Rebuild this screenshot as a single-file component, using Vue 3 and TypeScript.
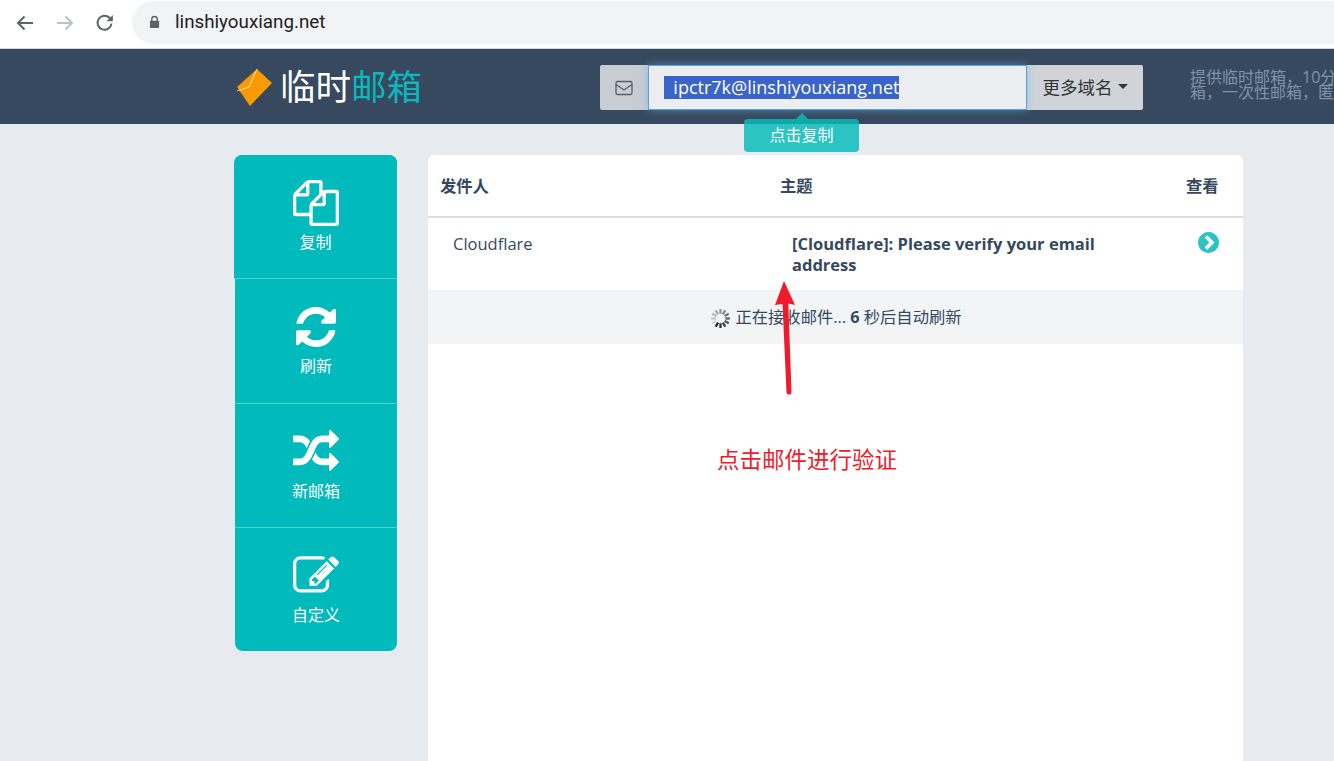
<script setup lang="ts">
// Ticks of the loading spinner, fading round the circle
const ticks = Array.from({ length: 12 }, (_, i) => ({
  angle: i * 30,
  opacity: 0.12 + (((i + 4) % 12) / 11) * 0.88,
}));

const rows = [
  { sender: 'Cloudflare', subject: '[Cloudflare]: Please verify your email address' },
];

const actions = [
  { label: '复制', box: '0 0 1792 1792', d: 'M1696 384q40 0 68 28t28 68v1216q0 40-28 68t-68 28h-960q-40 0-68-28t-28-68v-288h-544q-40 0-68-28t-28-68v-672q0-40 20-88t48-76l408-408q28-28 76-48t88-20h416q40 0 68 28t28 68v328q68-40 128-40h416zm-544 213l-299 299h299v-299zm-640-384l-299 299h299v-299zm196 647l316-316v-416h-384v416q0 40-28 68t-68 28h-416v640h512v-256q0-40 20-88t48-76zm956 804v-1152h-384v416q0 40-28 68t-68 28h-416v640h896z' },
  { label: '刷新', box: '14 14 1764 1764', d: 'M1639 1056q0 5-1 7-64 268-268 434.500t-478 166.500q-146 0-282.500-55t-243.500-157l-129 129q-19 19-45 19t-45-19-19-45v-448q0-26 19-45t45-19h448q26 0 45 19t19 45-19 45l-137 137q71 66 161 102t187 36q134 0 250-65t186-179q11-17 53-117 8-23 30-23h192q13 0 22.500 9.500t9.500 22.500zm25-800v448q0 26-19 45t-45 19h-448q-26 0-45-19t-19-45 19-45l138-138q-148-137-349-137-134 0-250 65t-186 179q-11 17-53 117-8 23-30 23h-199q-13 0-22.500-9.500t-9.500-22.500v-7q65-268 270-434.500t480-166.500q146 0 284 55.500t245 156.500l130-129q19-19 45-19t45 19 19 45z' },
  { label: '新邮箱', box: '0 128 1792 1536', d: 'M666 481q-60 92-137 273-22-45-37-72.500t-40.500-63.500-51-56.500-63-35-81.500-14.500h-224q-14 0-23-9t-9-23v-192q0-14 9-23t23-9h224q250 0 410 225zm1126 799q0 14-9 23l-320 320q-9 9-23 9-13 0-22.500-9.500t-9.500-22.500v-192q-32 0-85 .5t-81 1-73-1-71-5-64-10.500-63-18.500-58-28.500-59-40-55-53.500-56-69.500q59-93 136-273 22 45 37 72.500t40.500 63.500 51 56.500 63 35 81.500 14.500h256v-192q0-14 9-23t23-9q12 0 24 10l319 319q9 9 9 23zm0-896q0 14-9 23l-320 320q-9 9-23 9-13 0-22.500-9.500t-9.500-22.500v-192h-256q-48 0-87 15t-69 45-51 61.500-45 77.500q-32 62-78 171-29 66-49.500 111t-54 105-64 100-74 83-90 68.500-106.500 42-128 16.500h-224q-14 0-23-9t-9-23v-192q0-14 9-23t23-9h224q48 0 87-15t69-45 51-61.500 45-77.500q32-62 78-171 29-66 49.500-111t54-105 64-100 74-83 90-68.500 106.500-42 128-16.500h256v-192q0-14 9-23t23-9q12 0 24 10l319 319q9 9 9 23z' },
  { label: '自定义', box: '0 128 1792 1536', d: 'M888 1184l116-116-152-152-116 116v56h96v96h56zm440-720q-16-16-33 1l-350 350q-17 17-1 33t33-1l350-350q17-17 1-33zm80 594v190q0 119-84.500 203.500t-203.500 84.500h-832q-119 0-203.500-84.500t-84.500-203.500v-832q0-119 84.500-203.500t203.500-84.500h832q63 0 117 25 15 7 18 23 3 17-9 29l-49 49q-14 14-32 8-23-6-45-6h-832q-66 0-113 47t-47 113v832q0 66 47 113t113 47h832q66 0 113-47t47-113v-126q0-13 9-22l64-64q15-15 35-7t20 29zm-96-738l288 288-672 672h-288v-288zm444 132l-92 92-288-288 92-92q28-28 68-28t68 28l152 152q28 28 28 68t-28 68z' },
];
</script>

<template>
  <div class="page">
    <div class="browser-bar">
      <svg class="nav-icon" viewBox="0 0 20 20" fill="none" stroke="#5f6368" stroke-width="2"><path d="M18 10H3M9.500 3.500 3 10l6.500 6.500" /></svg>
      <svg class="nav-icon" viewBox="0 0 20 20" fill="none" stroke="#bdc1c6" stroke-width="2"><path d="M2 10h15M10.500 3.500 17 10l-6.500 6.500" /></svg>
      <svg class="nav-icon" viewBox="0 0 20 20" fill="none" stroke="#5f6368" stroke-width="2"><path d="M16.500 10.500a7 7 0 1 1-2-5.700L17 7" /><path d="M17.800 2v6.300h-6.300z" fill="#5f6368" stroke="none" /></svg>
      <div class="omnibox">
        <svg class="lock" viewBox="0 0 12 14"><path d="M3 6V4a3 3 0 0 1 6 0v2" fill="none" stroke="#5f6368" stroke-width="1.500" /><rect x="1" y="5.500" width="10" height="8" rx="1" fill="#5f6368" /></svg>
        <span class="url">linshiyouxiang.net</span>
      </div>
    </div>

    <header class="site-header">
      <div class="logo">
        <svg class="logo-mark" viewBox="0 0 36 38">
          <path d="M1 19 21 1 36 15 14 38z" fill="#f99a00" />
          <path d="M21 1 13 19 1 23" fill="none" stroke="#fff" stroke-opacity=".7" stroke-width="1" />
        </svg>
        <span class="logo-white">临时</span><span class="logo-teal">邮箱</span>
      </div>

      <div class="address-group">
        <div class="addon">
          <svg class="envelope" viewBox="0 0 18 16" fill="none" stroke="#555f68" stroke-width="1.300">
            <rect x="1" y="1.500" width="16" height="13" rx="1.500" />
            <path d="M1 4.500 9 10l8-5.500" />
          </svg>
        </div>
        <div class="address"><span class="selected">&nbsp;&nbsp;ipctr7k@linshiyouxiang.net</span></div>
        <div class="more">更多域名<i class="caret"></i></div>
        <div class="copy-tip">点击复制</div>
      </div>

      <div class="intro">
        <div>提供临时邮箱，10分钟邮箱，临时邮</div>
        <div>箱，一次性邮箱，匿名邮箱服务</div>
      </div>
    </header>

    <main class="content">
      <nav class="actions">
        <a v-for="item in actions" :key="item.label" class="action">
          <svg class="action-icon" :viewBox="item.box"><path :d="item.d" fill="#fff" /></svg>
          <span>{{ item.label }}</span>
        </a>
      </nav>

      <section class="mail-panel">
        <div class="mail-head">
          <div>发件人</div>
          <div>主题</div>
          <div>查看</div>
        </div>
        <div v-for="row in rows" :key="row.subject" class="mail-row">
          <div class="sender">{{ row.sender }}</div>
          <div class="subject">{{ row.subject }}</div>
          <div class="open">
            <svg viewBox="128 128 1536 1536"><path d="M845 1395l454-454q19-19 19-45t-19-45l-454-454q-19-19-45-19t-45 19l-102 102q-19 19-19 45t19 45l307 307-307 307q-19 19-19 45t19 45l102 102q19 19 45 19t45-19zm819-499q0 209-103 385.500t-279.500 279.500-385.500 103-385.500-103-279.500-279.500-103-385.500 103-385.500 279.500-279.500 385.500-103 385.500 103 279.500 279.500 103 385.500z" fill="#2cc3c5" /></svg>
          </div>
        </div>
        <div class="loading">
          <svg class="spinner" viewBox="-11 -11 22 22">
            <line
              v-for="tick in ticks"
              :key="tick.angle"
              x1="0"
              y1="-5"
              x2="0"
              y2="-10"
              stroke="#222"
              stroke-width="2.400"
              :opacity="tick.opacity"
              :transform="`rotate(${tick.angle})`"
            />
          </svg>
          <span>正在接收邮件... <b>6</b> 秒后自动刷新</span>
        </div>
      </section>
    </main>

    <svg class="arrow" viewBox="0 0 24 116">
      <path d="M10 0 21 24 14.300 22.500 17.500 111a2.500 2.500 0 0 1-5 .2L8.500 23 1 24z" fill="#ee1c2b" />
    </svg>
    <div class="note">点击邮件进行验证</div>
  </div>
</template>

<style scoped>
.page {
  position: relative;
  display: flex;
  flex-direction: column;
  height: 761px;
  overflow: hidden;
  background: #e7eaef;
  color: #34495e;
  font-family: "Open Sans", "Noto Sans CJK SC", sans-serif;
  font-size: 16.500px;
}

.browser-bar {
  display: flex;
  align-items: center;
  height: 48px;
  padding-left: 15px;
  background: #fff;
  border-bottom: 1px solid #d5d7da;
  flex-shrink: 0;
  box-sizing: content-box;
}

.nav-icon {
  width: 20px;
  height: 20px;
  margin-right: 20px;
  margin-top: -3px;
}

.omnibox {
  display: flex;
  align-items: center;
  flex: 1;
  height: 43px;
  margin-top: -4px;
  margin-left: -3px;
  padding-left: 17px;
  background: #f1f3f4;
  border-radius: 22px 0 0 22px;
}

.lock {
  width: 11px;
  height: 14px;
  margin-right: 15px;
}

.url {
  color: #202124;
  font-family: Roboto, sans-serif;
  font-size: 18.800px;
}

.site-header {
  display: flex;
  align-items: center;
  height: 75px;
  padding-left: 236px;
  background: #36495e;
  flex-shrink: 0;
  white-space: nowrap;
}

.logo {
  display: flex;
  align-items: center;
  width: 364px;
  flex-shrink: 0;
  font-size: 35.500px;
  line-height: 1;
  font-weight: 400;
}

.logo-mark {
  width: 36px;
  height: 38px;
  margin-right: 8px;
}

.logo-white {
  color: #fff;
}

.logo-teal {
  color: #0ab8bd;
}

.address-group {
  position: relative;
  display: flex;
  width: 543px;
  height: 45px;
  margin-top: 2px;
  flex-shrink: 0;
}

.addon {
  display: flex;
  align-items: center;
  justify-content: center;
  width: 48px;
  background: #c7cdd2;
  border-radius: 2px 0 0 2px;
}

.envelope {
  width: 18px;
  height: 16px;
}

.address {
  display: flex;
  align-items: center;
  width: 379px;
  padding-left: 15px;
  box-sizing: border-box;
  background: #ebedf0;
  border: 1px solid #57a3e0;
  box-shadow: 0 0 8px rgba(102, 175, 233, 0.6);
  font-size: 18px;
  z-index: 1;
}

.selected {
  background: #3a64c8;
  color: #fff;
  line-height: 23px;
}

.more {
  display: flex;
  align-items: center;
  justify-content: center;
  flex: 1;
  padding-bottom: 2px;
  background: #d0d4d8;
  border-radius: 0 2px 2px 0;
  color: #333;
  font-size: 17.500px;
}

.caret {
  width: 0;
  height: 0;
  margin-left: 5px;
  border-top: 5px solid #333;
  border-left: 5px solid transparent;
  border-right: 5px solid transparent;
}

.copy-tip {
  position: absolute;
  top: 54px;
  left: 144px;
  width: 115px;
  height: 33px;
  background: rgba(8, 187, 186, 0.84);
  border-radius: 4px;
  color: #fff;
  font-size: 16px;
  line-height: 33px;
  text-align: center;
  z-index: 2;
}

.copy-tip::before {
  content: "";
  position: absolute;
  top: -6px;
  left: 50%;
  margin-left: -6px;
  border-bottom: 6px solid rgba(8, 187, 186, 0.84);
  border-left: 6px solid transparent;
  border-right: 6px solid transparent;
}

.intro {
  margin: -3px 0 0 47px;
  color: #7f93a9;
  font-size: 16px;
  line-height: 15px;
}

.content {
  display: flex;
  align-items: flex-start;
  flex: 1;
  padding: 31px 0 0 235px;
  min-height: 0;
}

.actions {
  display: flex;
  flex-direction: column;
  width: 162px;
  height: 496px;
  background: #00babc;
  border-radius: 8px;
}

.action {
  display: flex;
  flex-direction: column;
  align-items: center;
  height: 124px;
  padding-top: 25px;
  box-sizing: border-box;
  color: #fff;
  font-size: 16px;
  line-height: 24px;
  border-bottom: 1px solid #4fd0cf;
}

.action:first-child {
  margin-left: -1px;
  background: #00babc;
  border-radius: 8px 8px 0 0;
}

.action:nth-child(2) {
  height: 125px;
}

.action:last-child {
  height: 123px;
  border-bottom: 0;
}

.action-icon {
  width: 46px;
  height: 46px;
  margin-bottom: 4px;
}

.mail-panel {
  width: 815px;
  height: 606px;
  margin-left: 31px;
  background: #fff;
  border-radius: 6px 6px 0 0;
}

.mail-head,
.mail-row {
  display: grid;
  grid-template-columns: 340px 406px 1fr;
}

.mail-head {
  height: 59px;
  padding-bottom: 2px;
  box-sizing: content-box;
  align-items: center;
  border-bottom: 2px solid #dddddd;
  font-size: 16.300px;
  font-weight: 700;
}

.mail-head > div {
  padding-left: 12px;
}

.mail-row {
  height: 72px;
  padding-top: 15px;
  box-sizing: border-box;
  line-height: 21px;
}

.sender {
  padding-left: 25px;
}

.subject {
  width: 330px;
  padding-left: 24px;
  font-weight: 700;
  box-sizing: content-box;
}

.open svg {
  display: block;
  width: 21px;
  height: 21px;
  margin: -1px 0 0 24px;
}

.loading {
  display: flex;
  align-items: center;
  justify-content: center;
  height: 54px;
  padding-bottom: 2px;
  box-sizing: border-box;
  background: #f2f4f6;
  font-size: 16.300px;
}

.spinner {
  width: 21px;
  height: 21px;
  margin: 5px 5px 0 0;
}

.arrow {
  position: absolute;
  left: 774px;
  top: 281px;
  width: 24px;
  height: 116px;
}

.note {
  position: absolute;
  left: 717px;
  top: 443px;
  color: #ee1c2b;
  font-size: 22.500px;
  line-height: 34px;
  white-space: nowrap;
}
</style>
